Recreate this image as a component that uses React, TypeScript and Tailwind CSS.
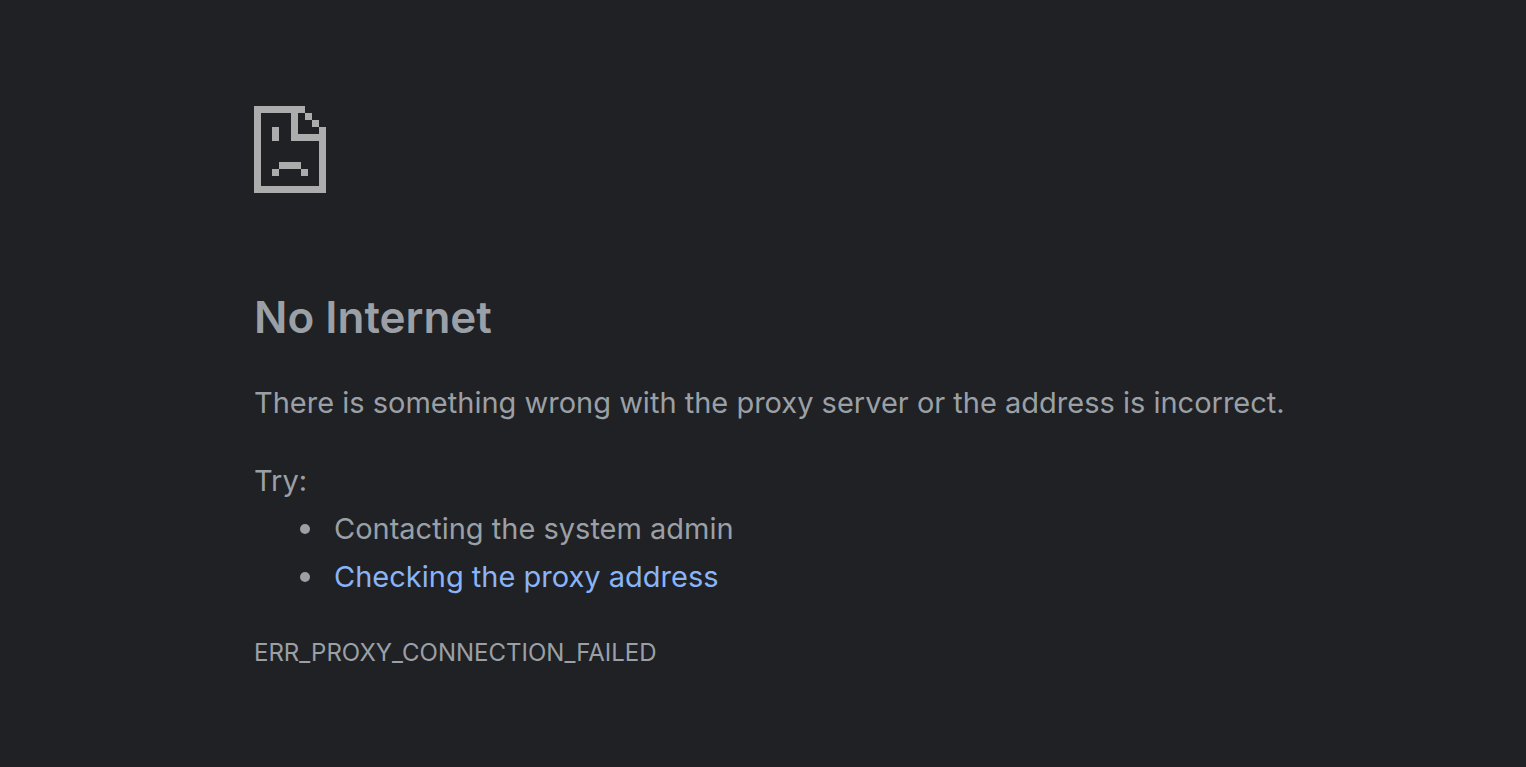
function SadPageIcon() {
  return (
    <svg
      className="h-[87px] w-[72px] fill-[#acacac]"
      viewBox="0 0 72 87"
      shapeRendering="crispEdges"
      aria-hidden="true"
    >
      {/* outline */}
      <path d="M0 0H51V7H7V80H65V21H72V87H0Z" />
      {/* folded corner */}
      <path d="M37 7H44V28H65V35H37Z" />
      <path d="M51 7H58V14H51ZM58 14H65V21H58Z" />
      {/* face */}
      <path d="M18 21H25V35H18Z" />
      <path d="M25 56H47V63H25ZM18 63H25V70H18ZM47 63H54V70H47Z" />
    </svg>
  );
}

function Bullet() {
  return <span className="size-2.5 shrink-0 rounded-full bg-[#9aa0a6]" />;
}

export default function App() {
  return (
    <main className="min-h-screen bg-[#202124] pt-[106px] pr-12 pb-20 pl-[254px] font-['Inter',sans-serif] text-[29px] leading-12 text-[#9aa0a6]">
      <SadPageIcon />
      <h1 className="mt-[94px] text-[44px] leading-[60px] font-semibold">
        No Internet
      </h1>
      <p className="mt-8">
        There is something wrong with the proxy server or the address is
        incorrect.
      </p>
      <p className="mt-[30px]">Try:</p>
      <ul className="pl-[46px]">
        <li className="flex items-center gap-6">
          <Bullet />
          Contacting the system admin
        </li>
        <li className="flex items-center gap-6">
          <Bullet />
          <a href="#buttons" className="text-[#8ab4f8]">
            Checking the proxy address
          </a>
        </li>
      </ul>
      <p className="mt-7 text-2xl leading-12">ERR_PROXY_CONNECTION_FAILED</p>
    </main>
  );
}
